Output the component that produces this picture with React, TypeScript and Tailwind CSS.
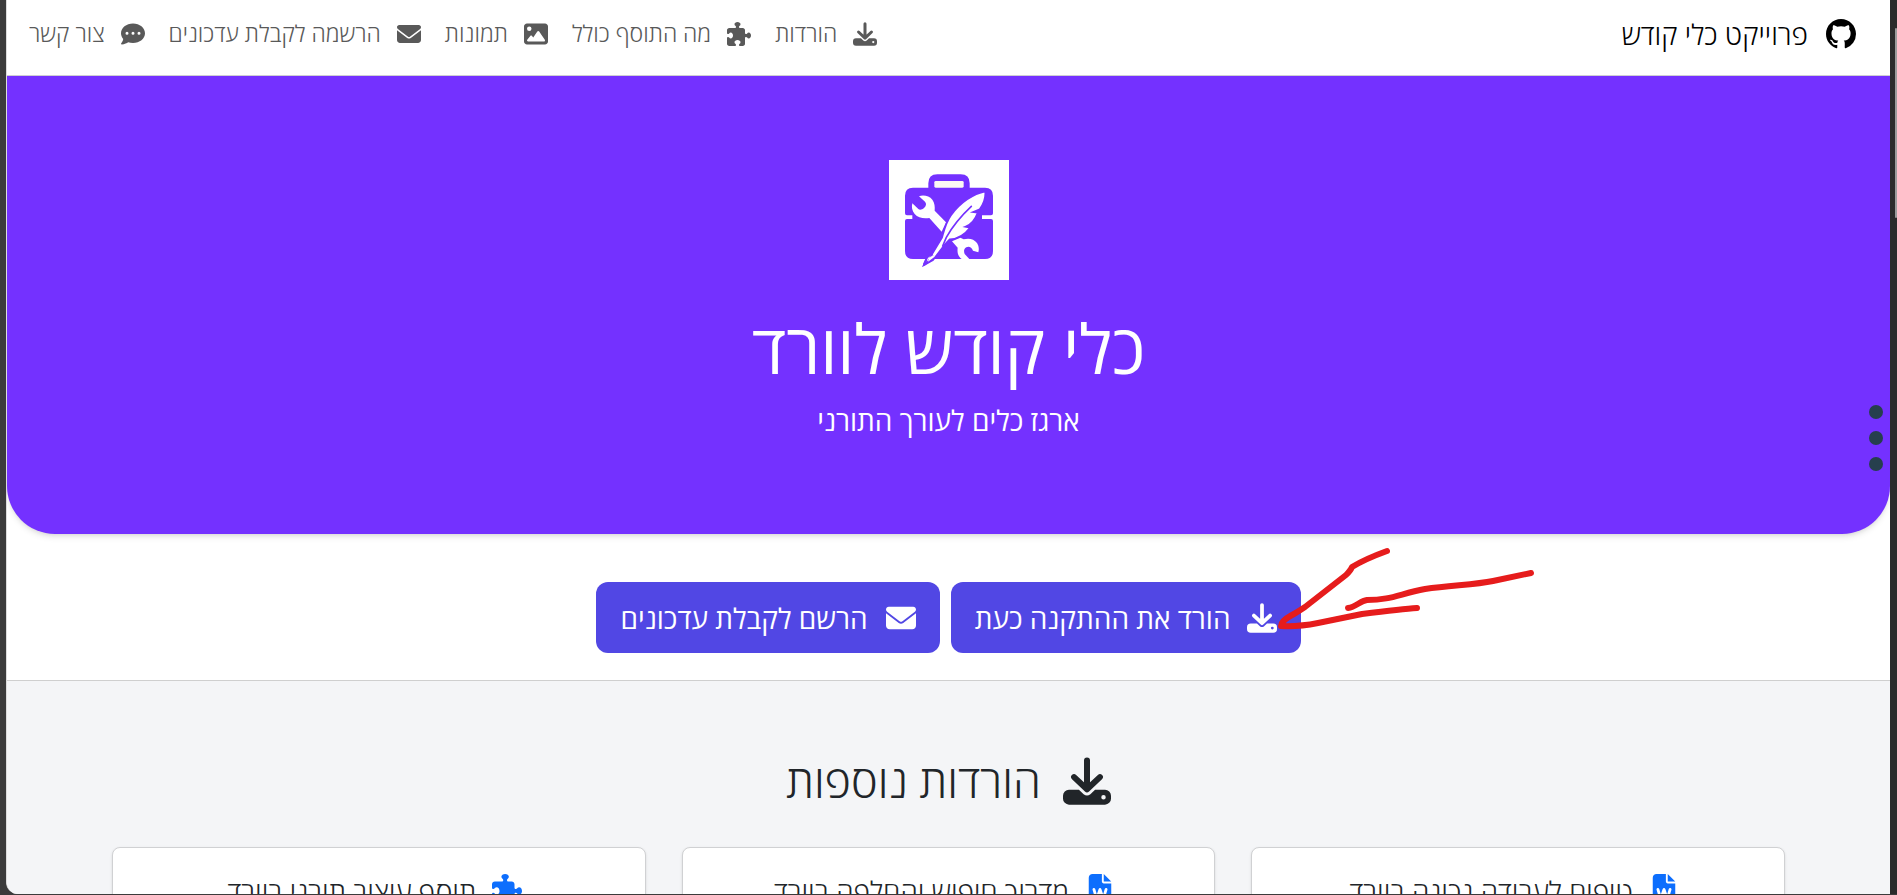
import type { ComponentType } from "react";
import { BsGithub } from "react-icons/bs";
import { FaCommentDots, FaEnvelope, FaFileWord, FaImage, FaPuzzlePiece } from "react-icons/fa6";

type IconType = ComponentType<{ className?: string }>;

function DownloadIcon({ className }: { className?: string }) {
  return (
    <svg viewBox="0 0 512 512" className={className} fill="currentColor" aria-hidden="true">
      <path
        d="M256 36V338M118 214L256 344L394 214"
        fill="none"
        stroke="currentColor"
        strokeWidth="64"
        strokeLinecap="round"
        strokeLinejoin="round"
      />
      <path
        fillRule="evenodd"
        d="M64 348H170L220 396Q256 426 292 396L342 348H448A64 64 0 0 1 512 412V444A64 64 0 0 1 448 508H64A64 64 0 0 1 0 444V412A64 64 0 0 1 64 348ZM432 404A24 24 0 1 0 432 452A24 24 0 1 0 432 404Z"
      />
    </svg>
  );
}

function Logo() {
  return (
    <svg viewBox="57 60 360 360" className="size-[120px]" role="img" aria-label="כלי קודש">
      <rect x="57" y="60" width="360" height="360" fill="#fff" />
      <path
        fill="#7431ff"
        d="M175 143V130Q175 103 202 103H272Q299 103 299 130V143H345Q369 143 369 167V220Q369 226 363 226H336V237H363Q369 237 369 243V333Q369 357 345 357H129Q105 357 105 333V243Q105 237 111 237H127V226H111Q105 226 105 220V167Q105 143 129 143Z"
      />
      <rect x="193" y="123" width="88" height="20" rx="4" fill="#fbf8f3" />
      {/* wrench */}
      <path
        fill="#fff"
        d="M147 169C160 164 178 168 187 179C194 188 195 200 194 212L228 247L215 275L178 234C162 237 144 234 134 222C126 213 124 201 127 190L145 207C150 211 157 208 162 204C169 198 170 190 165 185Z"
      />
      <path
        fill="#fff"
        d="M246 304L271 293L281 298C297 293 312 297 321 309C326 317 328 326 325 337L309 332C305 322 297 318 289 322C281 327 281 334 284 342L298 357H275C265 349 261 340 263 323Z"
      />
      {/* quill */}
      <path
        fill="#fff"
        stroke="#7431ff"
        strokeWidth="5"
        d="M346 154C311 161 270 187 243 226C228 247 223 269 216 293L187 341L171 353L161 376L189 360L225 313L239 298C260 297 284 284 300 263L286 260C302 254 315 240 323 218L309 216L329 208C341 192 347 173 346 154Z"
      />
      <path
        fill="none"
        stroke="#7431ff"
        strokeWidth="5"
        strokeLinecap="round"
        d="M304 199C273 228 248 258 229 292L218 318"
      />
      <path fill="#7431ff" d="M187 340L194 355L166 376Q160 379 159 372L167 354L173 352L170 366Z" />
      <path fill="#fff" d="M190 345L193 351L174 365L177 354Z" />
    </svg>
  );
}

const navLinks: { label: string; icon: IconType }[] = [
  { label: "הורדות", icon: DownloadIcon },
  { label: "מה התוסף כולל", icon: FaPuzzlePiece },
  { label: "תמונות", icon: FaImage },
  { label: "הרשמה לקבלת עדכונים", icon: FaEnvelope },
  { label: "צור קשר", icon: FaCommentDots },
];

const cards: { title: string; icon: IconType }[] = [
  { title: "טיפים לעבודה נכונה בוורד", icon: FaFileWord },
  { title: "מדריך חיפוש והחלפה בוורד", icon: FaFileWord },
  { title: "תוסף עיצוב תורני בוורד", icon: FaPuzzlePiece },
];

function Navbar() {
  return (
    <header className="flex h-[76px] shrink-0 items-center justify-between border-b border-[#cfcfd4] bg-white pr-[34px] pl-[22px] pb-2">
      <a href="#top" className="flex items-center gap-[18px] text-[28px] text-black">
        <BsGithub className="size-[30px]" />
        פרוייקט כלי קודש
      </a>
      <nav className="flex items-center gap-6 text-[23px] text-[#595959]">
        {navLinks.map((link) => (
          <a key={link.label} href="#downloads" className="flex items-center gap-4">
            <link.icon className="size-6" />
            {link.label}
          </a>
        ))}
      </nav>
    </header>
  );
}

function Hero() {
  return (
    <section className="flex shrink-0 flex-col items-center rounded-b-[48px] bg-[#7431ff] pt-[84px] pb-[94px] text-white shadow-md">
      <Logo />
      <h1 className="mt-7 text-[68px] leading-[80px] font-normal">כלי קודש לוורד</h1>
      <p className="mt-3 text-[28px] leading-10 font-normal">ארגז כלים לעורך התורני</p>
    </section>
  );
}

function Scribble() {
  return (
    <svg
      viewBox="1270 545 270 90"
      className="pointer-events-none absolute -top-[37px] -right-[240px] h-[90px] w-[270px]"
      fill="none"
      stroke="#e61c1c"
      strokeWidth="6"
      strokeLinecap="round"
      strokeLinejoin="round"
      aria-hidden="true"
    >
      <path d="M1386 551Q1364 559 1351 567Q1350 570 1345 575L1304 607Q1295 613 1291 615Q1280 621 1280 626Q1297 627 1317 623L1361 614Q1402 609 1416 608" />
      <path d="M1347 608C1355 607 1359 601 1366 600C1390 600 1398 594 1424 589C1450 585 1473 585 1492 581L1530 573" />
    </svg>
  );
}

export default function App() {
  return (
    <div
      dir="rtl"
      className="flex h-screen overflow-hidden border-b border-[#3b3b3b] bg-[#3b3b3b] font-['Open_Sans','Noto_Sans',sans-serif] font-light text-[#212529]"
    >
      {/* Window edge with the scrollbar */}
      <div className="flex w-[7px] shrink-0 flex-col bg-[#2b2b2b] pt-7">
        <div className="h-[190px] w-[2px] rounded-sm bg-[#9b9b9b]" />
      </div>

      <div id="top" className="relative flex min-w-0 flex-1 flex-col overflow-hidden rounded-bl-xl border-l border-[#dcdcdc] bg-white">
        <Navbar />
        <Hero />

        <div className="flex shrink-0 justify-center gap-[11px] border-b border-[#cfcfcf] pt-12 pb-[27px]">
          <div className="relative">
            <button className="flex h-[71px] items-center gap-4 rounded-xl bg-[#5147e4] px-6 text-[28px] font-normal text-white">
              <DownloadIcon className="size-[30px]" />
              הורד את ההתקנה כעת
            </button>
            <Scribble />
          </div>
          <button className="flex h-[71px] items-center gap-[18px] rounded-xl bg-[#5147e4] px-6 text-[28px] font-normal text-white">
            <FaEnvelope className="size-[30px]" />
            הרשם לקבלת עדכונים
          </button>
        </div>

        <section id="downloads" className="flex-1 bg-[#f4f5f7] px-[105px] pt-[66px]">
          <h2 className="flex items-center justify-center gap-[22px] text-[45px] leading-[68px]">
            <DownloadIcon className="size-12" />
            הורדות נוספות
          </h2>
          <div className="mt-8 grid grid-cols-3 gap-9">
            {cards.map((card) => (
              <article
                key={card.title}
                className="flex h-60 items-start justify-center gap-4 rounded-lg border border-[#d0d1d3] bg-white pt-[26px] pr-2 shadow-sm"
              >
                <card.icon className="size-[30px] text-[#0d6efd]" />
                <h3 className="text-[28px] leading-[34px]">{card.title}</h3>
              </article>
            ))}
          </div>
        </section>

        {/* Section dots */}
        <div className="absolute top-[405px] right-[7px] flex flex-col gap-3">
          <span className="size-[14px] rounded-full bg-[#263f4d]" />
          <span className="size-[14px] rounded-full bg-[#263f4d]" />
          <span className="size-[14px] rounded-full bg-[#263f4d]" />
        </div>
      </div>

      <div className="w-[6px] shrink-0 bg-[#3b3b3b]" />
    </div>
  );
}
